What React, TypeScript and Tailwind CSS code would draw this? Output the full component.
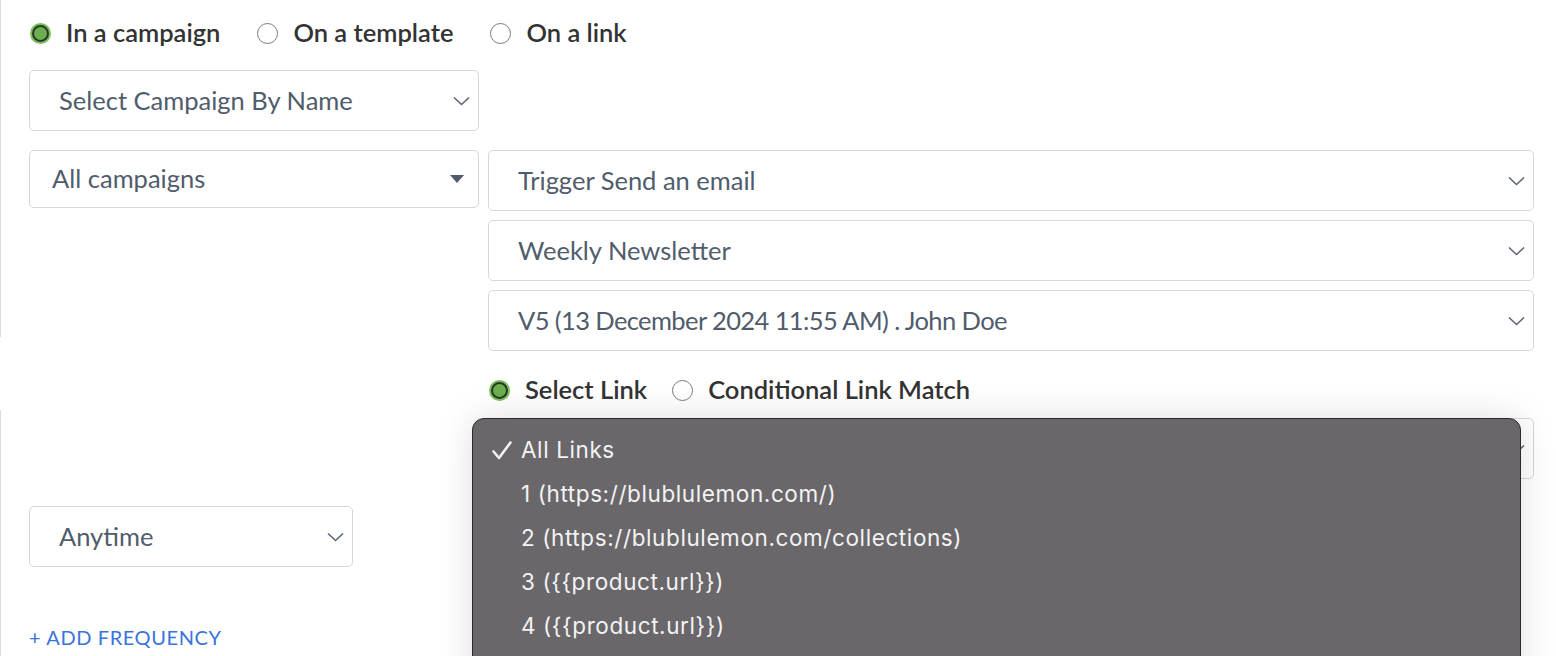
import React from "react";

// 下拉选项
const LINK_OPTIONS = [
  "All Links",
  "1 (https://blublulemon.com/)",
  "2 (https://blublulemon.com/collections)",
  "3 ({{product.url}})",
  "4 ({{product.url}})",
];

const Chevron: React.FC = () => (
  <svg width="17" height="10" viewBox="0 0 17 10" className="absolute right-[8px] top-1/2 -translate-y-1/2">
    <polyline points="1,1.5 8.5,8.5 16,1.5" fill="none" stroke="#5a6676" strokeWidth="1.6" />
  </svg>
);

const Caret: React.FC = () => (
  <svg width="14" height="8" viewBox="0 0 14 8" className="absolute right-[14px] top-1/2 -translate-y-1/2">
    <polygon points="0,0 14,0 7,8" fill="#4f5b6b" />
  </svg>
);

interface SelectBoxProps {
  label: string;
  className?: string;
  caret?: boolean;
}

const SelectBox: React.FC<SelectBoxProps> = ({ label, className = "", caret }) => (
  <div
    className={
      "relative flex items-center rounded-[5px] border border-[#d4d8de] bg-white text-[25.5px] text-[#505c6c] " +
      className
    }
  >
    <span className="-mt-[1px] truncate">{label}</span>
    {caret ? <Caret /> : <Chevron />}
  </div>
);

const Radio: React.FC<{ label: string; checked?: boolean }> = ({ label, checked }) => (
  <label className="flex items-center gap-[15px]">
    {checked ? (
      <span className="flex h-[21px] w-[21px] items-center justify-center rounded-full bg-[#79c15c] p-[2px]">
        <span className="h-full w-full rounded-full border-[2.5px] border-[#2e352d] bg-[#6ab04c]" />
      </span>
    ) : (
      <span className="h-[21px] w-[21px] rounded-full border-[1.5px] border-[#7a7a7a] bg-white" />
    )}
    <span className="-mt-[1px] text-[25.5px] font-semibold text-[#333333]">{label}</span>
  </label>
);

const App: React.FC = () => {
  return (
    <div
      className="relative h-[656px] w-full overflow-hidden bg-white bg-[linear-gradient(to_bottom,#dadada_337px,transparent_337px,transparent_410px,#dadada_410px)] bg-[length:1px_100%] bg-no-repeat pl-[29px] pr-[22px] pt-[21px]"
      style={{ fontFamily: "Lato, 'Open Sans', sans-serif" }}
    >
      <div className="flex h-[24px] items-center gap-[37px] pl-[1px]">
        <Radio label="In a campaign" checked />
        <Radio label="On a template" />
        <Radio label="On a link" />
      </div>

      <SelectBox label="Select Campaign By Name" className="mt-[25px] h-[61px] w-[450px] pl-[29px]" />

      <div className="mt-[19px] flex gap-[9px]">
        <SelectBox label="All campaigns" caret className="h-[58px] w-[450px] pl-[22px]" />
        <div className="flex flex-1 flex-col">
          <SelectBox label="Trigger Send an email" className="h-[61px] pl-[29px]" />
          <SelectBox label="Weekly Newsletter" className="mt-[9px] h-[61px] pl-[29px]" />
          <SelectBox label="V5 (13 December 2024 11:55 AM) . John Doe" className="mt-[9px] h-[61px] pl-[29px] tracking-[-0.6px]" />
          <div className="mt-[27px] flex h-[24px] items-center gap-[25px] pl-[1px]">
            <Radio label="Select Link" checked />
            <Radio label="Conditional Link Match" />
          </div>
          {/* 被下拉菜单遮住的链接选择框 */}
          <SelectBox label="" className="mt-[16px] h-[61px] pl-[29px]" />
        </div>
      </div>

      <SelectBox label="Anytime" className="mt-[27px] h-[61px] w-[324px] pl-[29px]" />

      <button className="mt-[55px] flex items-center text-[20px] tracking-[0.6px] text-[#3a74d8]">
        + ADD FREQUENCY
      </button>

      {/* 原生下拉菜单浮层 */}
      <div
        className="absolute left-[472px] top-[418px] h-[280px] w-[1049px] rounded-t-[12px] border border-[#2b2b2b] bg-[#69676a] pt-[9px] shadow-[0_0_36px_rgba(0,0,0,0.13)]"
        style={{ fontFamily: "Inter, 'Liberation Sans', sans-serif" }}
      >
        {LINK_OPTIONS.map((opt, i) => (
          <div key={opt} className="flex h-[44px] items-center pl-[19px] text-[22.5px] tracking-[0.6px] text-[#f3f3f3]">
            <span className="flex w-[29px] items-center">
              {i === 0 && (
                <svg width="20" height="19" viewBox="0 0 20 19">
                  <path d="M1.5 10.5 L7 17 L18.5 1.5" fill="none" stroke="#f3f3f3" strokeWidth="2.6" strokeLinecap="round" strokeLinejoin="round" />
                </svg>
              )}
            </span>
            <span>{opt}</span>
          </div>
        ))}
      </div>
    </div>
  );
};

export default App;
